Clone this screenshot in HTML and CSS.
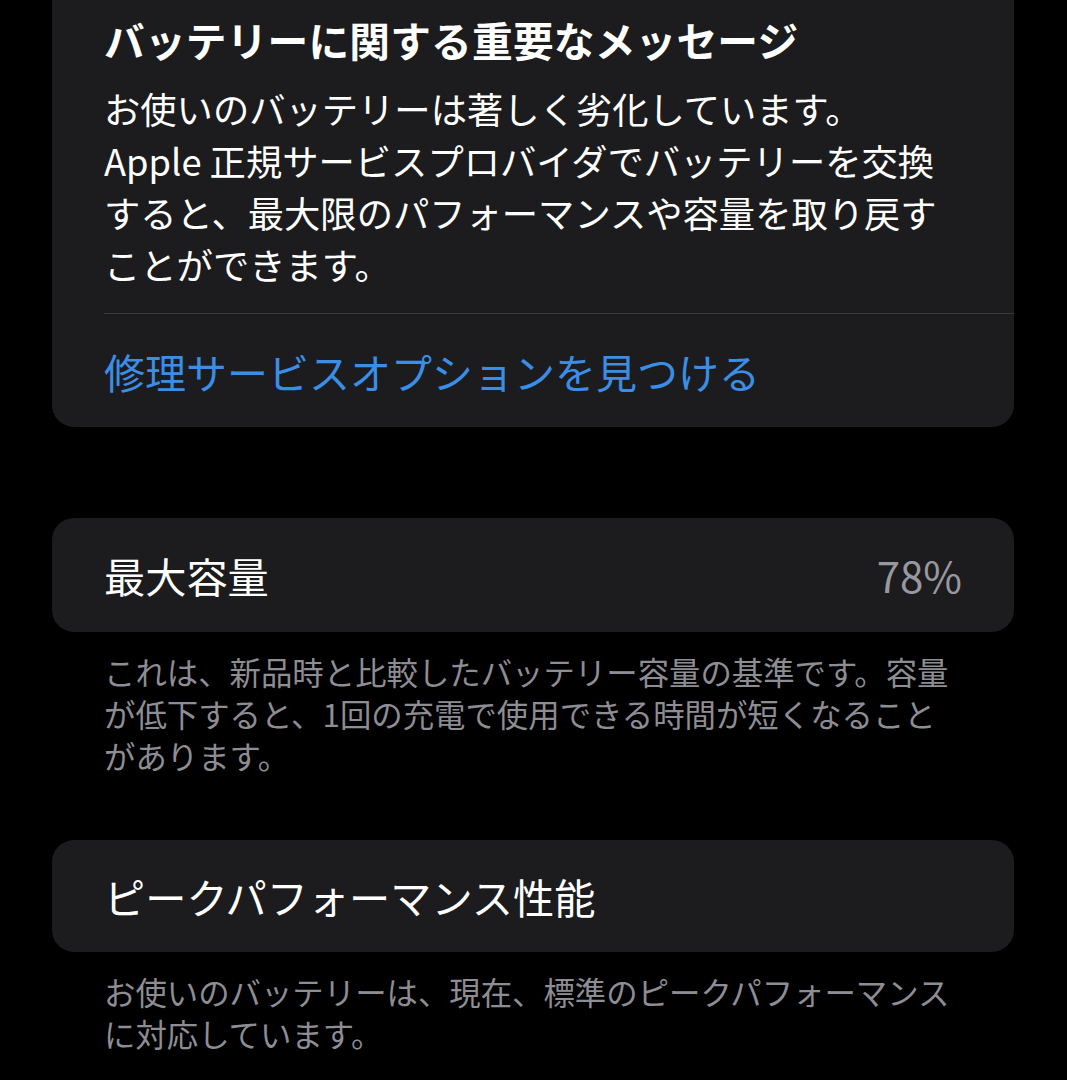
FILE: index.html
```html
<!DOCTYPE html>
<html lang="ja">
<head>
<meta charset="utf-8">
<title>バッテリーの状態</title>
<link rel="stylesheet" href="styles.css">
</head>
<body>
<main class="page">
  <section class="card card-message">
    <h1 class="msg-title">バッテリーに関する重要なメッセージ</h1>
    <p class="msg-body">お使いのバッテリーは著しく劣化しています。<br>Apple 正規サービスプロバイダでバッテリーを交換<br>すると、最大限のパフォーマンスや容量を取り戻す<br>ことができます。</p>
    <div class="separator"></div>
    <a class="msg-link" href="#">修理サービスオプションを見つける</a>
  </section>

  <section class="card card-row card-capacity">
    <span class="row-label">最大容量</span>
    <span class="row-value">78%</span>
  </section>
  <p class="footnote">これは、新品時と比較したバッテリー容量の基準です。容量<br>が低下すると、1回の充電で使用できる時間が短くなること<br>があります。</p>

  <section class="card card-row card-peak">
    <span class="row-label">ピークパフォーマンス性能</span>
  </section>
  <p class="footnote">お使いのバッテリーは、現在、標準のピークパフォーマンス<br>に対応しています。</p>
</main>
</body>
</html>
```

FILE: styles.css
```css
html, body {
  margin: 0;
  padding: 0;
  background: #000;
}

body {
  font-family: "Noto Sans CJK JP", "Noto Sans", sans-serif;
  color: #fff;
  overflow: hidden;
}

.page {
  display: flex;
  flex-direction: column;
  padding: 0 53px 0 52px;
}

.card {
  background: #1c1c1e;
  border-radius: 22px;
}

.card-message {
  border-radius: 0 0 22px 22px;
  padding: 14px 0 0 52px;
  display: flex;
  flex-direction: column;
}

.msg-title {
  margin: 0;
  font-size: 40.7px;
  font-weight: 700;
  line-height: 52px;
  letter-spacing: 0.2px;
}

.msg-body {
  margin: 16px 0 0 0;
  font-size: 36.3px;
  font-weight: 400;
  line-height: 52px;
}

.separator {
  margin-top: 23px;
  height: 1px;
  background: #3a3a3c;
}

.msg-link {
  height: 113px;
  display: flex;
  align-items: center;
  font-size: 41px;
  line-height: 52px;
  color: #3a8ee6;
  text-decoration: none;
}

.card-row {
  display: flex;
  align-items: center;
  justify-content: space-between;
  padding: 0 52px;
}

.card-capacity {
  margin-top: 91px;
  height: 114px;
}

.card-peak {
  margin-top: 63px;
  height: 112px;
}

.row-label {
  font-size: 41.2px;
  line-height: 52px;
}

.row-value {
  font-size: 42px;
  line-height: 52px;
  color: #98989e;
}

.footnote {
  margin: 19px 0 0 0;
  padding: 0 52px;
  font-size: 31.4px;
  line-height: 42px;
  color: #8d8d93;
}
```
